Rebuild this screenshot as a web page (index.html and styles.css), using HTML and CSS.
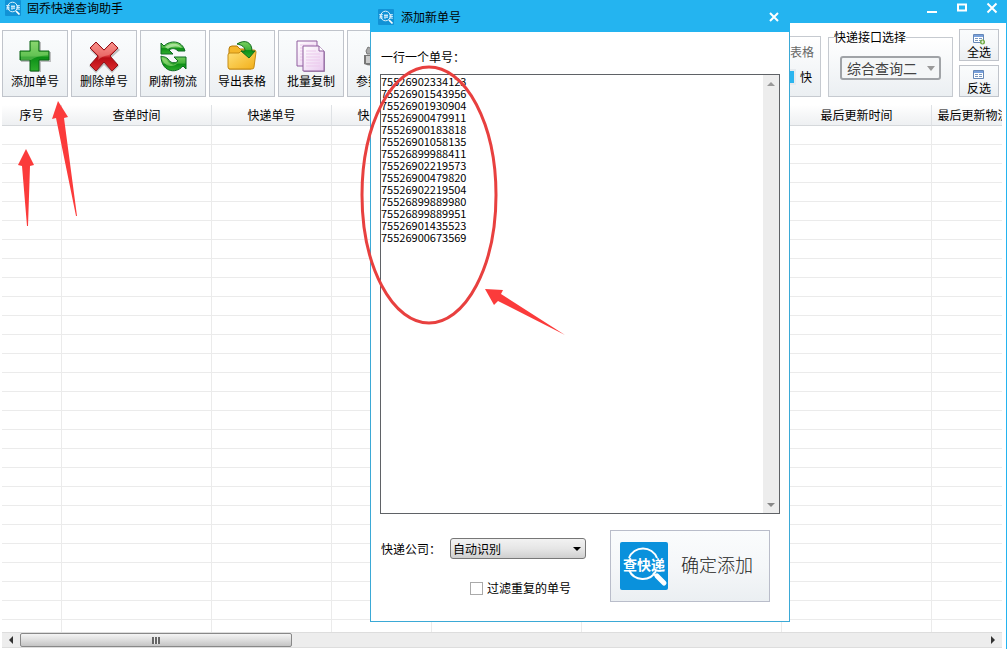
FILE: index.html
```html
<!DOCTYPE html>
<html lang="zh-CN">
<head>
<meta charset="utf-8">
<title>固乔快递查询助手</title>
<link rel="stylesheet" href="styles.css">
</head>
<body>
<svg class="defs" width="0" height="0" aria-hidden="true">
  <defs>
    <linearGradient id="green" x1="0" y1="0" x2="0" y2="1"><stop offset="0" stop-color="#7ad062"/><stop offset=".48" stop-color="#42b23a"/><stop offset=".55" stop-color="#0c8f17"/><stop offset="1" stop-color="#2fae2d"/></linearGradient>
    <linearGradient id="red" x1="0" y1="0" x2="0" y2="1"><stop offset="0" stop-color="#f47f7b"/><stop offset=".48" stop-color="#dc3a3d"/><stop offset=".55" stop-color="#b80d15"/><stop offset="1" stop-color="#dd2a2d"/></linearGradient>
    <linearGradient id="gold" x1="0" y1="0" x2="1" y2="1"><stop offset="0" stop-color="#ffe27a"/><stop offset="1" stop-color="#f2ae18"/></linearGradient>
    <linearGradient id="paper" x1="0" y1="0" x2="1" y2="1"><stop offset="0" stop-color="#fff"/><stop offset="1" stop-color="#e9c9ef"/></linearGradient>
    <symbol id="mark" viewBox="0 0 16 16">
      <rect width="16" height="16" rx="1" fill="#1192d6"/>
      <circle cx="7.5" cy="7" r="4.8" fill="none" stroke="#d9f1fd" stroke-width="1"/>
      <path d="M11 11l3.5 3.5" stroke="#fff" stroke-width="1.7"/>
      <path d="M1 5.700h4M1.500 7.500h3M1 9h4M3 5v4M6 6.500h4M6 8.200h4M7 5v5M9 5v4M11.500 5.700h3.500M11.500 7.500h3.500M11 9.200h4M13 5v4" stroke="#e3f5ff" stroke-width=".8"/>
    </symbol>
  </defs>
</svg>

<div class="window">
  <header class="titlebar">
    <svg class="mark"><use href="#mark"/></svg>
    <h1 class="title">固乔快递查询助手</h1>
    <div class="win-controls">
      <button class="win-btn" aria-label="最小化"><svg viewBox="0 0 12 12"><path d="M1 10h10" stroke="#fff" stroke-width="2"/></svg></button>
      <button class="win-btn" aria-label="最大化"><svg viewBox="0 0 12 12"><path d="M2 2.500h8v6H2z" fill="none" stroke="#fff" stroke-width="2"/></svg></button>
      <button class="win-btn" aria-label="关闭"><svg viewBox="0 0 12 12"><path d="M1.500 1.500l9 9M10.500 1.500l-9 9" stroke="#fff" stroke-width="2"/></svg></button>
    </div>
  </header>

  <div class="toolbar">
    <button class="tool">
      <svg class="tool-icon" viewBox="0 0 34 34"><path d="M13 3h10v10h10v10H23v10H13V23H3V13h10z" fill="#777" opacity=".45"/><path d="M12 2h9v10h10v9H21v11h-9V21H2v-9h10z" fill="url(#green)" stroke="#0b6315"/><path d="M13 3h7v10h10v3Q18 17 13 21H3v-8h10z" fill="#a5e386" opacity=".35"/></svg>
      添加单号
    </button>
    <button class="tool">
      <svg class="tool-icon" viewBox="0 0 34 34"><path d="M10 5l8 8 8-9 7 7-9 8 8 8-7 7-8-8-8 8-7-7 9-8-8-8z" fill="#777" opacity=".45"/><path d="M9 3l8 8 8-8 6 6-8 8 8 9-6 6-8-9-8 9-6-6 8-9-8-8z" fill="url(#red)" stroke="#8d1218"/><path d="M9 4l8 8 8-8 5 5-8 7q-7 1-11 5l1-4-8-8z" fill="#ffb1a8" opacity=".4"/></svg>
      删除单号
    </button>
    <button class="tool">
      <svg class="tool-icon" viewBox="0 0 34 34"><g stroke="#0b6a20"><path d="M5 4l3 3c6-6 18-6 21 5h-7c-3-3-6-3-9-1l4 4H5z" fill="url(#green)"/><path d="M30 18H18l4 4c-3 3-8 2-10-2-3-3-6-2-7-3 0 15 14 19 22 10l3 3z" fill="url(#green)"/></g><path d="M9 8c6-5 14-4 17 1-5-2-10-2-14 1z" fill="#c9f0b9" opacity=".7"/><path d="M6 19c3 0 5 1 6 4 3 3 7 3 10 1-5 5-14 4-16-5z" fill="#a5e386" opacity=".6"/></svg>
      刷新物流
    </button>
    <button class="tool">
      <svg class="tool-icon" viewBox="0 0 34 34"><path d="M4 10q0-3 3-3h5l3 3h11v20H4z" fill="#f5b72a" stroke="#b77a08"/><path d="M3 16q0-2 2-2h9l3-3h12q2 0 2 2l-2 15q0 2-2 2H5q-2 0-2-2z" fill="url(#gold)" stroke="#c68b12"/><path d="M12 5c8-5 15-2 15 7h3l-6 7-8-7h4c0-4-3-6-8-7z" fill="url(#green)" stroke="#116a1c"/></svg>
      导出表格
    </button>
    <button class="tool">
      <svg class="tool-icon" viewBox="0 0 34 34"><path d="M3 2h20v25H3z" fill="url(#paper)" stroke="#8f5d9e"/><path d="M6 6h14M6 9h14M6 12h14M6 15h14M6 18h14M6 21h14" stroke="#ecc9ec"/><path d="M10 8h16l5 5v20H10z" fill="#735783" opacity=".6"/><path d="M9 7h16l5 5v20H9z" fill="url(#paper)" stroke="#8f5d9e"/><path d="M25 7v5h5" fill="#fff" stroke="#8f5d9e"/><path d="M12 12h10M12 15h14M12 18h14M12 21h14M12 24h14M12 27h14" stroke="#ecc9ec"/></svg>
      批量复制
    </button>
    <button class="tool">
      <svg class="tool-icon" viewBox="0 0 34 34"><path d="M3 12l2-4 4 2 2-3 3 4-2 4H4z" fill="#aaa" stroke="#777"/><path d="M1 16h14v9q-7 3-14 0z" fill="#777"/><path d="M3 17h5v7H3z" fill="#ccc"/><circle cx="21" cy="17" r="8" fill="none" stroke="#888" stroke-width="5"/></svg>
      参数设置
    </button>
    <fieldset class="group group-export">
      <div class="export-line">表格</div>
      <div class="export-line"><span class="swatch"></span><span class="export-name">快</span></div>
    </fieldset>
    <fieldset class="group group-api">
      <legend class="legend">快递接口选择</legend>
      <select class="api-select" aria-label="快递接口选择"><option>综合查询二</option></select>
    </fieldset>
    <div class="picks">
      <button class="pick">
        <svg class="pick-icon" viewBox="0 0 12 12"><path d="M.5 1.500h10v8H.5z" fill="#fff" stroke="#6587b7"/><path d="M1 3h9" stroke="#79a1dc" stroke-width="2"/><path d="M2 5.500h3M6 5.500h3M2 7.500h3M6 7.500h2" stroke="#7b98bd"/><circle cx="9.500" cy="9" r="2.500" fill="#6faa42"/><path d="M8 9h3M9.500 7.500v3" stroke="#fff" stroke-width=".7"/></svg>
        全选
      </button>
      <button class="pick">
        <svg class="pick-icon" viewBox="0 0 12 12"><path d="M.5 1.500h10v8H.5z" fill="#fff" stroke="#6587b7"/><path d="M1 3h9" stroke="#79a1dc" stroke-width="2"/><path d="M2 5.500h3M6 5.500h3M2 7.500h3M6 7.500h3" stroke="#7b98bd"/></svg>
        反选
      </button>
    </div>
  </div>

  <div class="grid-wrap">
    <table class="grid">
      <colgroup><col class="c60"><col class="c150"><col class="c120"><col class="c100"><col class="c150"><col class="c200"><col class="c150"><col class="c80"></colgroup>
      <thead><tr><th>序号</th><th>查单时间</th><th>快递单号</th><th>快递公司</th><th></th><th></th><th>最后更新时间</th><th>最后更新物流</th></tr></thead>
      <tbody id="rows"></tbody>
    </table>
  </div>

  <div class="hscroll">
    <button class="hs-btn" aria-label="向左"><svg viewBox="0 0 8 8"><path d="M6 0v8L2 4z" fill="#333"/></svg></button>
    <div class="hs-track"><div class="hs-thumb"><span class="grip"></span></div></div>
    <button class="hs-btn" aria-label="向右"><svg viewBox="0 0 8 8"><path d="M2 0v8l4-4z" fill="#333"/></svg></button>
  </div>
</div>

<section class="dialog" role="dialog" aria-labelledby="dlg-title">
  <header class="dlg-bar">
    <svg class="mark"><use href="#mark"/></svg>
    <h2 class="title" id="dlg-title">添加新单号</h2>
    <button class="win-btn dlg-close" aria-label="关闭"><svg viewBox="0 0 12 12"><path d="M2 2l8 8M10 2l-8 8" stroke="#fff" stroke-width="2"/></svg></button>
  </header>
  <div class="dlg-body">
    <label class="dlg-label" for="numbers">一行一个单号：</label>
    <div class="memo">
      <textarea class="memo-text" id="numbers" spellcheck="false">75526902334123
75526901543956
75526901930904
75526900479911
75526900183818
75526901058135
75526899988411
75526902219573
75526900479820
75526902219504
75526899889980
75526899889951
75526901435523
75526900673569</textarea>
      <div class="vscroll">
        <svg viewBox="0 0 8 8"><path d="M0 6h8L4 2z" fill="#999"/></svg>
        <svg viewBox="0 0 8 8"><path d="M0 2h8L4 6z" fill="#888"/></svg>
      </div>
    </div>
    <div class="dlg-foot">
      <div class="options">
        <div class="company">
          <label for="company">快递公司：</label>
          <select class="company-select" id="company"><option>自动识别</option></select>
        </div>
        <label class="dedupe"><input class="check" type="checkbox">过滤重复的单号</label>
      </div>
      <button class="confirm">
        <svg class="logo" viewBox="0 0 48 48"><rect width="48" height="48" rx="2" fill="#0a91dc"/><path d="M9 16A15 15 0 0 1 37 16M9 28A15 15 0 0 0 36 29" fill="none" stroke="#fff" stroke-width="2"/><path d="M33 31l4 4" stroke="#fff" stroke-width="2"/><path d="M37 34l7 7" stroke="#fff" stroke-width="5" stroke-linecap="round"/><text class="logo-text" x="24" y="28" text-anchor="middle">查快递</text></svg>
        <span class="confirm-text">确定添加</span>
      </button>
    </div>
  </div>
</section>

<svg class="marks" width="1007" height="649" viewBox="0 0 1007 649" aria-hidden="true">
  <ellipse cx="429" cy="195" rx="67" ry="128" fill="none" stroke="#e8403f" stroke-width="3"/>
  <g fill="#fb3b3b">
    <path d="M26 149l8 16-4 1-2 60h-1l-5-60-4-1z"/>
    <path d="M58 101l10 16-4 1 13 98h-1L56 118l-4 1z"/>
    <path d="M485 289l18 1-2 4 64 41-67-34-4 4z"/>
  </g>
</svg>
<script src="rows.js"></script>
</body>
</html>
```

FILE: styles.css
```css
* { box-sizing: border-box; }

body {
  margin: 0;
  background: #fff;
  color: #000;
  font: 12px/16px "Noto Sans CJK SC", sans-serif;
}

button, select, textarea, input {
  margin: 0;
  color: inherit;
  font: inherit;
}

.defs { position: absolute; }

.window {
  display: flex;
  flex-direction: column;
  height: 100vh;
  overflow: hidden;
  border-right: 1px solid #24b4f0;
}

.titlebar, .dlg-bar {
  display: flex;
  align-items: center;
  background: #24b4f0;
}

.titlebar {
  flex: none;
  height: 23px;
  margin-right: -1px;
  padding: 0 9px 7px 5px;
}

.mark { width: 16px; height: 16px; }

.title {
  margin: 0 0 0 6px;
  font-size: 12px;
  font-weight: 400;
}

.win-controls {
  display: flex;
  gap: 18px;
  margin-left: auto;
}

.win-btn {
  display: flex;
  width: 12px;
  height: 12px;
  padding: 0;
  border: 0;
  background: none;
}

.toolbar {
  display: flex;
  flex: none;
  gap: 3px;
  height: 74px;
  padding: 7px 7px 0 2px;
}

.tool, .pick, .confirm {
  border: 1px solid #c0c4cb;
  background: linear-gradient(#fafcfd, #f5f7f9 50%, #ebeff2);
}

.tool {
  display: flex;
  flex: none;
  flex-direction: column;
  align-items: center;
  width: 66px;
  padding: 8px 0 0;
}

.tool-icon { width: 34px; height: 34px; }

.group {
  min-width: 0;
  margin: 0;
  border: 1px solid #c6cad0;
  background: linear-gradient(#fff, #f5f7f9 50%, #ebeff2);
}

.group-export {
  width: 120px;
  margin: 6px 4px 0 auto;
  padding: 7px 6px 0 0;
  color: #666;
}

.export-line {
  display: flex;
  align-items: center;
  justify-content: flex-end;
  gap: 4px;
  height: 24px;
  padding-bottom: 8px;
}

.export-line:last-child { height: 18px; padding: 0 2px 0 0; }
.export-name { color: #000; }

.swatch {
  width: 20px;
  height: 16px;
  border: 2px solid #e6eaee;
  background: #2bb5ef;
}

.group-api {
  width: 125px;
  margin-right: 3px;
  padding: 0 11px;
}

.legend {
  margin-left: -6px;
  padding: 0;
  line-height: 14px;
}

.api-select {
  width: 100%;
  height: 24px;
  margin-top: 12px;
  padding: 0 5px;
  appearance: none;
  border: 2px solid #a0a3a7;
  border-radius: 3px;
  background: #f4f6f7 url("data:image/svg+xml,%3Csvg xmlns='http://www.w3.org/2000/svg' width='8' height='8'%3E%3Cpath d='M0 2h8L4 7z' fill='%23999'/%3E%3C/svg%3E") no-repeat right 4px center;
  color: #444;
  font-size: 14px;
  line-height: 18px;
}

.picks {
  display: flex;
  flex-direction: column;
  gap: 4px;
  height: 68px;
  margin-top: -1px;
}

.pick {
  display: flex;
  flex: 1;
  flex-direction: column;
  align-items: center;
  width: 40px;
  padding: 3px 0 0;
  line-height: 14px;
}

.pick-icon { flex: none; width: 12px; height: 12px; }

.grid-wrap {
  flex: 1;
  min-height: 0;
  margin: 8px 4px 0 2px;
  overflow: hidden;
}

.grid {
  width: 1014px;
  border-collapse: separate;
  border-spacing: 0;
  table-layout: fixed;
}

.c60 { width: 60px; }
.c80 { width: 84px; }
.c100 { width: 100px; }
.c120 { width: 120px; }
.c150 { width: 150px; }
.c200 { width: 200px; }

.grid th {
  height: 21px;
  padding: 0;
  border-right: 1px solid #dfe2e5;
  border-bottom: 1px solid #d5d8db;
  background: linear-gradient(#fff, #f6f7f8 50%, #eef0f2);
  font-weight: 400;
  white-space: nowrap;
}

.grid td {
  height: 19px;
  padding: 0;
  border-right: 1px solid #ebebeb;
  border-bottom: 1px solid #ebebeb;
}

.hscroll {
  display: flex;
  flex: none;
  height: 16px;
  margin: 0 4px 1px 2px;
  border-top: 1px solid #ddd;
  border-bottom: 1px solid #ddd;
  background: #ededed;
}

.hs-btn {
  display: flex;
  align-items: center;
  justify-content: center;
  width: 18px;
  padding: 0;
  border: 0;
  background: none;
}

.hs-btn svg { width: 8px; height: 8px; }
.hs-track { flex: 1; }

.hs-thumb {
  display: flex;
  align-items: center;
  justify-content: center;
  width: 272px;
  height: 100%;
  border: 1px solid #888;
  border-radius: 2px;
  background: linear-gradient(#f4f4f4, #e0e0e0 45%, #c4c4c4);
}

.grip {
  width: 8px;
  height: 7px;
  background: repeating-linear-gradient(90deg, #666 0 2px, #eee 2px 3px);
}

.dialog {
  position: absolute;
  top: 0;
  left: 370px;
  width: 420px;
  border: 1px solid #3ba9d6;
  border-top: 0;
  background: #fff;
}

.dlg-bar {
  height: 32px;
  margin: 0 -1px;
  padding: 2px 10px 0 8px;
}

.dlg-bar .title { margin-left: 7px; }
.dlg-close { margin-left: auto; }
.dlg-body { padding: 17px 9px 19px; }

.dlg-label {
  display: block;
  margin-bottom: 9px;
  padding-left: 1px;
}

.memo {
  display: flex;
  height: 440px;
  border: 1px solid #5f6266;
}

.memo-text {
  flex: 1;
  padding: 0;
  border: 0;
  outline: 0;
  resize: none;
  overflow: hidden;
  font-size: 11px;
  line-height: 12px;
}

.vscroll {
  display: flex;
  flex-direction: column;
  align-items: center;
  justify-content: space-between;
  width: 16px;
  padding: 5px 0 4px;
  background: #ededed;
}

.vscroll svg { width: 8px; height: 8px; }

.dlg-foot {
  display: flex;
  justify-content: space-between;
  padding: 16px 10px 0 1px;
}

.company {
  display: flex;
  align-items: center;
  gap: 9px;
  margin-top: 8px;
}

.company-select {
  width: 136px;
  height: 21px;
  padding: 0 2px;
  appearance: none;
  border: 1px solid #777;
  border-radius: 3px;
  background: url("data:image/svg+xml,%3Csvg xmlns='http://www.w3.org/2000/svg' width='8' height='6'%3E%3Cpath d='M0 1h8L4 5z'/%3E%3C/svg%3E") no-repeat right 4px center, linear-gradient(#f2f2f2, #e6e6e6 50%, #cfcfcf);
}

.dedupe {
  display: flex;
  align-items: center;
  gap: 4px;
  margin: 21px 0 0 89px;
}

.check {
  width: 13px;
  height: 13px;
  appearance: none;
  border: 1px solid #aaa;
  background: #fff;
}

.confirm {
  display: flex;
  align-items: center;
  gap: 13px;
  width: 160px;
  height: 72px;
  padding: 0 9px;
  border-color: #b9bdca;
  color: #222;
  font-size: 18px;
  font-weight: 300;
  white-space: nowrap;
}

.confirm-text { padding-bottom: 5px; }

.logo { flex: none; width: 48px; height: 48px; }

.logo-text {
  fill: #fff;
  font-size: 14px;
  font-weight: 700;
}

.marks {
  position: absolute;
  top: 0;
  left: 0;
  pointer-events: none;
}
```

FILE: rows.js
```js
const body = document.getElementById("rows");
const ROWS = 27;
const COLUMNS = 8;
for (let r = 0; r < ROWS; r++) {
  const row = body.insertRow();
  for (let c = 0; c < COLUMNS; c++) row.insertCell();
}
```
